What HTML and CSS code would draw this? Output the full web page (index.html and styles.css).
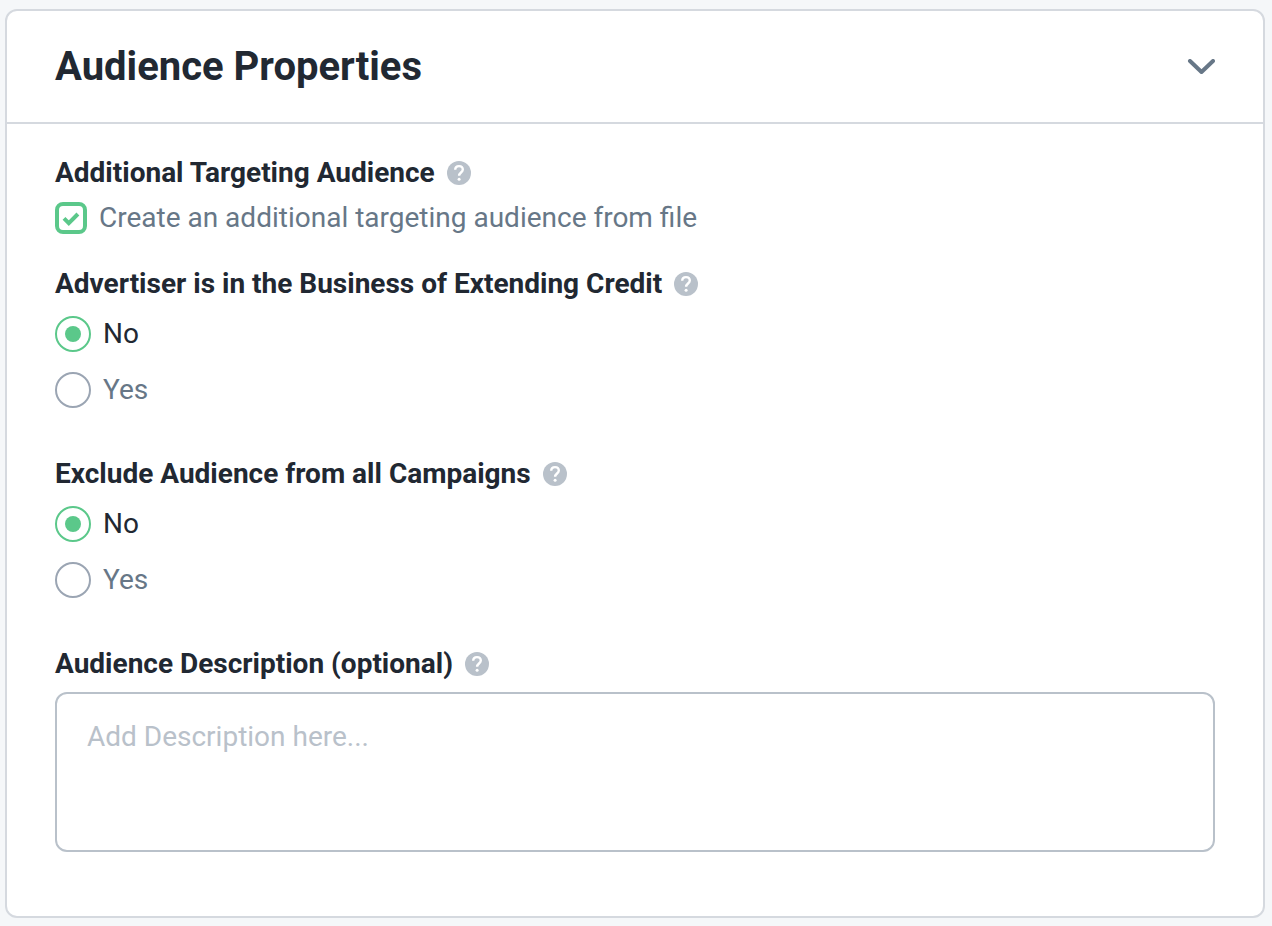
FILE: index.html
```html
<!DOCTYPE html>
<html lang="en">
<head>
    <meta charset="UTF-8">
    <meta name="viewport" content="width=device-width, initial-scale=1">
    <title>Audience Properties</title>
    <link rel="stylesheet" href="styles.css">
</head>
<body>
    <!-- question mark icon shared by all field titles -->
    <svg class="sprite" aria-hidden="true">
        <symbol id="icon-help" viewBox="0 0 24 24">
            <circle cx="12" cy="12" r="12" fill="#b9c1ca"/>
            <path d="M8.2 8.8C8.2 6.6 9.8 5.1 12 5.1s3.8 1.4 3.8 3.5c0 2.8-3.7 3.1-3.7 6.2" fill="none" stroke="#fff" stroke-width="2.4"/>
            <circle cx="12.1" cy="18.3" r="1.5" fill="#fff"/>
        </symbol>
    </svg>

    <form class="card">
        <header class="card-header">
            <h1 class="card-title">Audience Properties</h1>
            <button type="button" class="toggle" aria-label="Collapse">
                <svg width="28" height="16" viewBox="0 0 28 16">
                    <path d="M3 2L14.5 13L26 2" fill="none" stroke="#677787" stroke-width="4" stroke-linecap="round" stroke-linejoin="round"/>
                </svg>
            </button>
        </header>

        <div class="card-body">
            <fieldset class="field field-check">
                <legend class="field-title">Additional Targeting Audience <svg class="help"><use href="#icon-help"/></svg></legend>
                <label class="check">
                    <span class="check-box">
                        <input type="checkbox" name="additional" checked>
                        <svg class="check-mark" viewBox="0 0 32 32">
                            <path d="M9 16.4L13.8 21.2L22.9 12" fill="none" stroke="#5bc88a" stroke-width="4"/>
                        </svg>
                    </span>
                    Create an additional targeting audience from file
                </label>
            </fieldset>

            <fieldset class="field">
                <legend class="field-title">Advertiser is in the Business of Extending Credit <svg class="help"><use href="#icon-help"/></svg></legend>
                <div class="options">
                    <label class="radio"><input type="radio" name="credit" value="no" checked><span>No</span></label>
                    <label class="radio"><input type="radio" name="credit" value="yes"><span>Yes</span></label>
                </div>
            </fieldset>

            <fieldset class="field">
                <legend class="field-title">Exclude Audience from all Campaigns <svg class="help"><use href="#icon-help"/></svg></legend>
                <div class="options">
                    <label class="radio"><input type="radio" name="exclude" value="no" checked><span>No</span></label>
                    <label class="radio"><input type="radio" name="exclude" value="yes"><span>Yes</span></label>
                </div>
            </fieldset>

            <div class="field-text">
                <label class="field-title" for="description">Audience Description (optional) <svg class="help"><use href="#icon-help"/></svg></label>
                <textarea id="description" class="description" placeholder="Add Description here..."></textarea>
            </div>
        </div>
    </form>
</body>
</html>
```

FILE: styles.css
```css
:root {
    --green: #5bc88a;
    --dark: #212832;
    --gray: #677787;
    --line: #d5d9df;
    --input-line: #b9c1ca;
}

* {
    margin: 0;
    padding: 0;
    box-sizing: border-box;
}

body {
    background-color: #f5f7f9;
    padding: 9px 7px 8px 5px;
    font-family: Roboto, "Liberation Sans", sans-serif;
    font-size: 28px;
    line-height: 32px;
    color: var(--gray);
}

.sprite {
    display: none;
}

.card {
    background-color: #fff;
    border: 2px solid var(--line);
    border-radius: 12px;
}

.card-header {
    display: flex;
    align-items: center;
    justify-content: space-between;
    padding: 32px 48px;
    border-bottom: 2px solid var(--line);
}

.card-title {
    font-size: 40px;
    line-height: 47px;
    font-weight: bold;
    color: var(--dark);
}

.toggle {
    background: none;
    border: none;
    cursor: pointer;
}

.toggle svg {
    display: block;
}

.card-body {
    padding: 33px 48px 64px;
}

.field {
    border: none;
    margin-bottom: 50px;
}

.field-check {
    margin-bottom: 34px;
}

.field-title {
    display: flex;
    align-items: center;
    gap: 12px;
    font-weight: bold;
    color: var(--dark);
}

.help {
    width: 24px;
    height: 24px;
    flex-shrink: 0;
}

.check {
    display: flex;
    align-items: center;
    gap: 12px;
    margin-top: 13px;
}

.check-box {
    position: relative;
    width: 32px;
    height: 32px;
}

.check-box input {
    appearance: none;
    display: block;
    width: 32px;
    height: 32px;
    border: 4px solid var(--input-line);
    border-radius: 8px;
}

.check-box input:checked {
    border-color: var(--green);
}

.check-mark {
    position: absolute;
    top: 0;
    left: 0;
    width: 32px;
    height: 32px;
    pointer-events: none;
    visibility: hidden;
}

.check-box input:checked + .check-mark {
    visibility: visible;
}

.options {
    display: flex;
    flex-direction: column;
    gap: 20px;
    margin-top: 16px;
}

.radio {
    display: flex;
    align-items: center;
    gap: 12px;
    line-height: 34px;
}

.radio input {
    appearance: none;
    display: grid;
    place-items: center;
    width: 36px;
    height: 36px;
    border: 2px solid #9ba5b3;
    border-radius: 50%;
}

.radio input:checked {
    border-color: var(--green);
}

.radio input:checked::before {
    content: "";
    width: 16px;
    height: 16px;
    border-radius: 50%;
    background-color: var(--green);
}

.radio input:checked + span {
    color: var(--dark);
}

.description {
    display: block;
    width: 100%;
    height: 160px;
    margin-top: 12px;
    padding: 27px 30px;
    border: 2px solid var(--input-line);
    border-radius: 12px;
    background-color: #fff;
    font: inherit;
    color: var(--dark);
    resize: none;
}

.description::placeholder {
    color: var(--input-line);
}
```
